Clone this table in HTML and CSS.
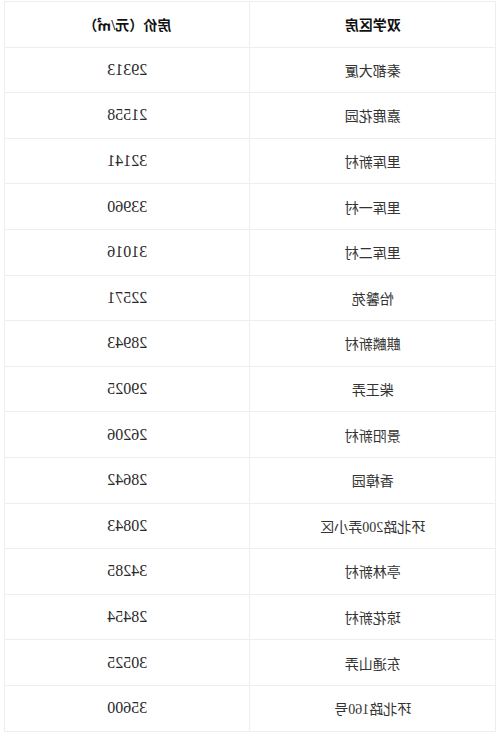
FILE: index.html
```html
<!DOCTYPE html>
<html lang="zh">
<head>
<meta charset="utf-8">
<link rel="stylesheet" href="styles.css">
</head>
<body>
<div class="mirror">
<table class="tbl">
<thead>
<tr><th>双学区房</th><th>房价（元/㎡）</th></tr>
</thead>
<tbody>
<tr><td>秦都大厦</td><td class="num">29313</td></tr>
<tr><td>嘉鹿花园</td><td class="num">21558</td></tr>
<tr><td>里厍新村</td><td class="num">32141</td></tr>
<tr><td>里厍一村</td><td class="num">33960</td></tr>
<tr><td>里厍二村</td><td class="num">31016</td></tr>
<tr><td>怡馨苑</td><td class="num">22571</td></tr>
<tr><td>麒麟新村</td><td class="num">28943</td></tr>
<tr><td>柴王弄</td><td class="num">29025</td></tr>
<tr><td>景阳新村</td><td class="num">26206</td></tr>
<tr><td>香樟园</td><td class="num">28642</td></tr>
<tr><td>环北路200弄小区</td><td class="num">20843</td></tr>
<tr><td>亭林新村</td><td class="num">34285</td></tr>
<tr><td>琼花新村</td><td class="num">28454</td></tr>
<tr><td>东通山弄</td><td class="num">30525</td></tr>
<tr><td>环北路160号</td><td class="num">35600</td></tr>
</tbody>
</table>
</div>
</body>
</html>
```

FILE: styles.css
```css
html, body {
  margin: 0;
  padding: 0;
  background: #ffffff;
}
.mirror {
  width: 500px;
  padding-top: 1px;
  transform: scaleX(-1);
}
.tbl {
  width: 492px;
  margin-left: 4px;
  border-collapse: collapse;
  table-layout: fixed;
  font-family: "Liberation Serif", "Noto Sans CJK SC", serif;
  font-size: 14px;
  color: #333333;
}
.tbl th,
.tbl td {
  height: 44.6px;
  padding: 0;
  border: 1px solid #eeeeee;
  text-align: center;
  vertical-align: middle;
}
.tbl th {
  font-weight: bold;
  color: #111111;
  font-size: 14px;
}
.tbl .num {
  font-size: 16px;
  color: #2a2a2a;
}
```
